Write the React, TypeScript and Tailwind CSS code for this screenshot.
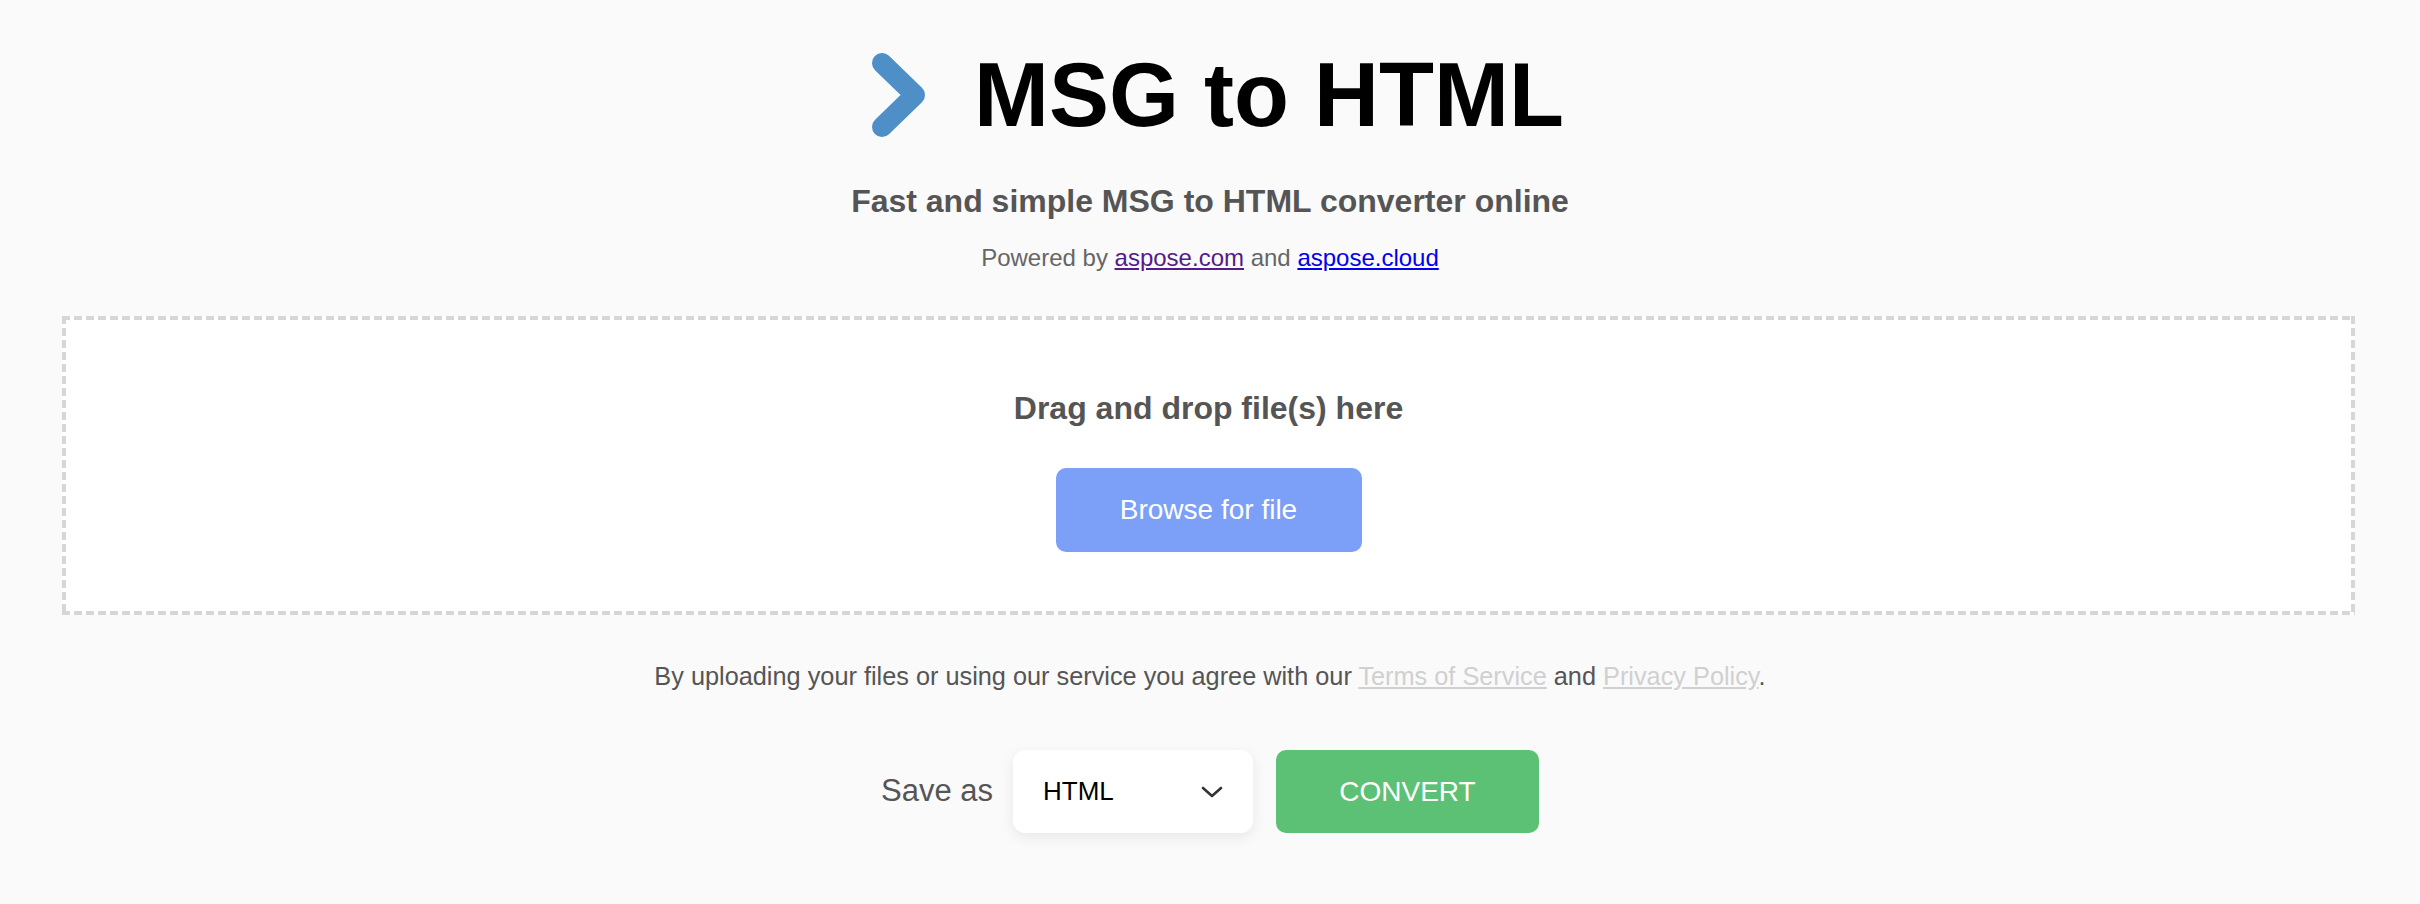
import React from "react"

const BrandArrow = () => (
  <svg width="54" height="84" viewBox="0 0 54 84" className="shrink-0 blur-[0.6px]">
    <polyline
      points="10,10 43,42 10,74"
      fill="none"
      stroke="#4f8fc7"
      strokeWidth="20"
      strokeLinecap="round"
      strokeLinejoin="round"
    />
  </svg>
)

const SelectArrow = () => (
  <svg width="22" height="12" viewBox="0 0 22 12">
    <polyline points="2,2 11,10 20,2" fill="none" stroke="#333" strokeWidth="2.6" strokeLinecap="round" strokeLinejoin="round" />
  </svg>
)

const App = () => {
  return (
    <div className="min-h-[904px] bg-[#fafafa] font-['Liberation_Sans',Arial,sans-serif] text-[#555] flex flex-col items-center">
      <header className="mt-[50px] h-[90px] flex items-center pl-[16px]">
        <BrandArrow />
        <h1 className="ml-[48px] text-[90px] leading-[90px] font-bold text-black">MSG to HTML</h1>
      </header>

      <h2 className="mt-[41px] text-[32px] leading-[40px] font-bold">
        Fast and simple MSG to HTML converter online
      </h2>
      <p className="mt-[21px] text-[24px] leading-[32px] text-[#666]">
        Powered by <a href="#" className="underline text-[#551a8b]">aspose.com</a> and{" "}
        <a href="#" className="underline text-[#0000ee]">aspose.cloud</a>
      </p>

      {/* drop zone, dashes drawn as 8px on / 4px off */}
      <div
        className="mt-[42px] self-stretch ml-[62px] mr-[65px] bg-white bg-no-repeat pt-[72px] pb-[63px] flex flex-col items-center
        [background-image:repeating-linear-gradient(90deg,#d6d6d6_0_8px,transparent_8px_12px),repeating-linear-gradient(90deg,#d6d6d6_0_8px,transparent_8px_12px),repeating-linear-gradient(180deg,#d6d6d6_0_8px,transparent_8px_12px),repeating-linear-gradient(180deg,#d6d6d6_0_8px,transparent_8px_12px)]
        [background-size:100%_4px,100%_4px,4px_100%,4px_100%]
        [background-position:0_0,0_100%,0_0,100%_0]"
      >
        <p className="text-[32px] leading-[40px] font-bold">Drag and drop file(s) here</p>
        <button className="mt-[40px] w-[306px] h-[84px] rounded-[10px] bg-[#7ca0f7] text-white text-[28px]">
          Browse for file
        </button>
      </div>

      <p className="mt-[45px] text-[25.3px] leading-[32px]">
        By uploading your files or using our service you agree with our{" "}
        <a href="#" className="underline text-[#d0d0d0]">Terms of Service</a> and{" "}
        <a href="#" className="underline text-[#d0d0d0]">Privacy Policy</a>.
      </p>

      <div className="mt-[58px] flex items-center">
        <span className="text-[31px] mr-[20px]">Save as</span>
        <div className="w-[240px] h-[83px] rounded-[12px] bg-white shadow-[0_4px_14px_rgba(0,0,0,0.08)] px-[30px] flex items-center justify-between text-[26px] text-black">
          <span>HTML</span>
          <SelectArrow />
        </div>
        <button className="ml-[23px] w-[263px] h-[83px] rounded-[10px] bg-[#5cc175] text-white text-[28px]">
          CONVERT
        </button>
      </div>
    </div>
  )
}

export default App
